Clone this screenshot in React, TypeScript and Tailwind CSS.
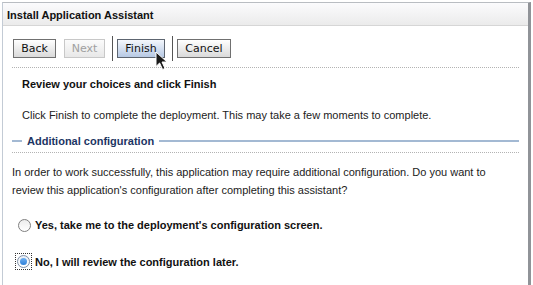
import React from 'react';

const Btn: React.FC<{ label: string; disabled?: boolean; active?: boolean; w: string }> = ({ label, disabled, active, w }) => (
  <div
    className={`${w} h-[19px] flex items-center justify-center border text-[11px] leading-none ${
      disabled
        ? 'border-[#c8c8c8] text-[#a0a0a0] bg-gradient-to-b from-[#fbfbfb] to-[#e8e8e8]'
        : active
        ? 'border-[#5d6570] text-[#111] bg-gradient-to-b from-[#f4f7fc] to-[#b7c9e4]'
        : 'border-[#707070] text-[#111] bg-gradient-to-b from-[#ffffff] to-[#dadada]'
    }`}
    style={{ fontFamily: '"DejaVu Sans", sans-serif' }}
  >
    {label}
  </div>
);

const Cursor = () => (
  <svg width="15" height="20" viewBox="0 0 15 20" className="absolute left-[155px] top-[51px]">
    <path d="M1 1 L1 15.5 L4.6 12 L7.6 18.5 L10 17.4 L7 11 L12 11 Z" fill="#1a1a1a" stroke="#fff" strokeWidth="1" strokeLinejoin="round" />
  </svg>
);

const Dotted = () => <div className="ml-[9px] w-[507px] border-t border-dotted border-[#b3b3b3]" />;

export default function App() {
  return (
    <div className="w-[533px] h-[285px] bg-white relative overflow-hidden" style={{ fontFamily: '"Liberation Sans", Arial, sans-serif' }}>
      <div className="absolute left-[2px] top-[2px] w-[529px] h-[290px] border-t border-t-[#b9bdc2] border-l border-l-[#c3cbd5] border-r-[3px] border-r-[#909398] flex flex-col">
        <div className="h-[23px] shrink-0 bg-gradient-to-b from-[#fbfbfd] to-[#ebebeb] border-b border-[#d6d6d6] flex items-center pl-[4px] pt-[2px] text-[11px] font-bold text-[#111]">
          Install Application Assistant
        </div>
        <div className="flex items-center h-[25px] mt-[10px] pl-[10px] shrink-0">
          <Btn label="Back" w="w-[43px]" />
          <div className="w-[8px]" />
          <Btn label="Next" w="w-[41px]" disabled />
          <div className="w-[8px] h-[25px] border-r border-[#555]" />
          <div className="w-[4px]" />
          <Btn label="Finish" w="w-[48px]" active />
          <div className="w-[8px] h-[25px] border-r border-[#555]" />
          <div className="w-[4px]" />
          <Btn label="Cancel" w="w-[54px]" />
        </div>
        <div className="mt-[6px]"><Dotted /></div>
        <div className="mt-[9px] pl-[19px] text-[11px] leading-[14px] font-bold text-[#111]">Review your choices and click Finish</div>
        <div className="mt-[17px] pl-[19px] text-[11px] leading-[14px] text-[#222]">Click Finish to complete the deployment. This may take a few moments to complete.</div>
        <div className="mt-[12px] ml-[9px] w-[507px] h-[14px] flex items-center">
          <div className="w-[10px] h-[2px] bg-[#a3b9d3]" />
          <div className="px-[5px] text-[11px] leading-[14px] font-bold text-[#1c3563]">Additional configuration</div>
          <div className="flex-1 h-[2px] bg-[#a3b9d3]" />
        </div>
        <div className="mt-[4px]"><Dotted /></div>
        <div className="mt-[10px] pl-[9px] text-[11px] leading-[18px] text-[#222]">
          <div>In order to work successfully, this application may require additional configuration. Do you want to</div>
          <div>review this application's configuration after completing this assistant?</div>
        </div>
        <div className="mt-[18px] h-[16px] flex items-center pl-[15px]">
          <div className="w-[13px] h-[13px] rounded-full border border-[#808080] bg-gradient-to-b from-[#ececec] to-[#ffffff]" />
          <span className="pl-[4px] text-[11px] leading-[14px] font-bold text-[#111]">Yes, take me to the deployment's configuration screen.</span>
        </div>
        <div className="mt-[20px] h-[17px] flex items-center pl-[12px]">
          <div className="w-[17px] h-[17px] border border-dotted border-[#333] flex items-center justify-center">
            <div className="w-[13px] h-[13px] rounded-full border border-[#7f8fa6] bg-gradient-to-b from-[#e8eef6] to-[#ffffff] flex items-center justify-center">
              <div className="w-[7px] h-[7px] rounded-full bg-gradient-to-b from-[#6fb0f0] to-[#2c7fd8]" />
            </div>
          </div>
          <span className="pl-[3px] text-[11px] leading-[14px] font-bold text-[#111]">No, I will review the configuration later.</span>
        </div>
      </div>
      <Cursor />
    </div>
  );
}
